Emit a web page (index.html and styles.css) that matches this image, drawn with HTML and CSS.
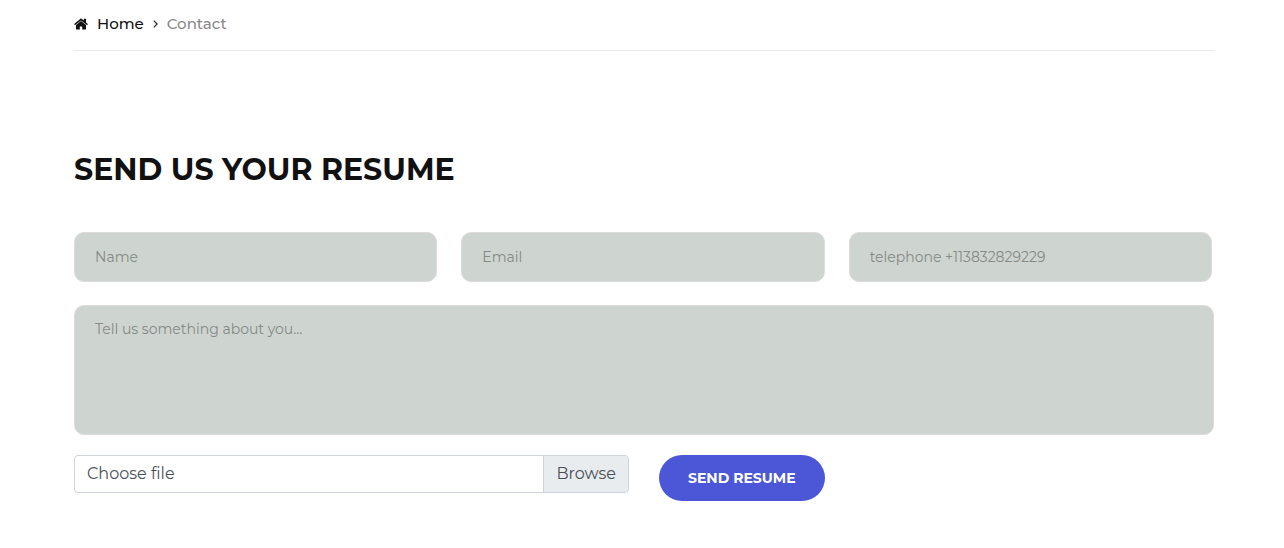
FILE: index.html
```
<!DOCTYPE html>
<html lang="en">
<head>
<meta charset="utf-8">
<meta name="viewport" content="width=device-width, initial-scale=1">
<title>Contact</title>
<link rel="stylesheet" href="styles.css">
</head>
<body>
<main class="page">
  <nav class="breadcrumb" aria-label="Breadcrumb">
    <a class="breadcrumb-home" href="#">
      <svg class="icon-home" viewBox="0 0 14 12" aria-hidden="true"><path d="M7 2.9 2 7v4c0 .4.2.6.6.6h3.2V8.4h2.4v3.2h3.2c.4 0 .6-.2.6-.6V7z"/><path d="M13.8 5.9 12 4.4V1.1c0-.2-.1-.3-.3-.3h-1.6c-.2 0-.3.1-.3.3v1.5L7.8.9c-.5-.4-1.1-.4-1.6 0L.2 5.9c-.1.1-.1.3 0 .4l.5.6c.1.1.3.1.4 0L7 2.4l5.9 4.5c.1.1.3.1.4 0l.5-.6c.1-.1.1-.3 0-.4z"/></svg>
      <span>Home</span>
    </a>
    <svg class="icon-chevron" viewBox="0 0 5 8" aria-hidden="true"><path d="M.8.7 4.1 4 .8 7.3"/></svg>
    <span class="breadcrumb-current" aria-current="page">Contact</span>
  </nav>

  <h1 class="title">SEND US YOUR RESUME</h1>

  <form class="form">
    <div class="fields">
      <input class="field" type="text" aria-label="Name" placeholder="Name">
      <input class="field" type="email" aria-label="Email" placeholder="Email">
      <input class="field" type="tel" aria-label="Telephone" placeholder="telephone +113832829229">
    </div>
    <textarea class="field message" aria-label="Message" placeholder="Tell us something about you..."></textarea>
    <div class="actions">
      <div class="file">
        <input class="file-input" type="file" id="resume">
        <label class="file-label" for="resume">
          <span class="file-name">Choose file</span>
          <span class="file-browse">Browse</span>
        </label>
      </div>
      <div><button class="submit" type="button">SEND RESUME</button></div>
    </div>
  </form>
</main>
</body>
</html>
```
FILE: styles.css
```
* {
  box-sizing: border-box;
}

body {
  margin: 0;
  background: #fff;
  color: #111;
  font-family: Montserrat, Inter, "Open Sans", sans-serif;
}

.page {
  padding: 12px 70px 47px 74px;
}

.breadcrumb {
  display: flex;
  align-items: center;
  gap: 9px;
  padding-bottom: 14px;
  border-bottom: 1px solid #e9e9e9;
  font-size: 15px;
  font-weight: 500;
  line-height: 24px;
}

.breadcrumb-home {
  display: flex;
  align-items: center;
  gap: 9px;
  color: #111;
  text-decoration: none;
}

.icon-home {
  width: 14px;
  height: 12px;
  fill: #111;
}

.icon-chevron {
  width: 5px;
  height: 8px;
  fill: none;
  stroke: #222;
  stroke-width: 1.2;
}

.breadcrumb-current {
  color: #888;
}

.title {
  margin: 99px 0 42px;
  font-size: 30px;
  font-weight: 700;
  line-height: 40px;
}

.fields {
  display: grid;
  grid-template-columns: repeat(3, 1fr);
  gap: 24px;
  padding-right: 2px;
}

.field {
  display: block;
  width: 100%;
  height: 50px;
  padding: 0 20px;
  border: 1px solid #dcdcdc;
  border-radius: 10px;
  background: #ced4cf;
  color: #222;
  font-family: inherit;
  font-size: 14px;
  font-weight: 400;
}

.field::placeholder {
  color: #868a87;
  opacity: 1;
}

.message {
  height: 130px;
  margin-top: 23px;
  padding: 12px 20px;
  line-height: 22px;
  resize: none;
}

.actions {
  display: grid;
  grid-template-columns: 1fr 1fr;
  gap: 30px;
  margin-top: 20px;
}

.file {
  position: relative;
  height: 38px;
}

.file-input {
  position: absolute;
  inset: 0;
  width: 100%;
  opacity: 0;
}

.file-label {
  display: flex;
  height: 100%;
  overflow: hidden;
  border: 1px solid #ced4da;
  border-radius: 4px;
  color: #495057;
  font-size: 16px;
  font-weight: 400;
  font-variant-ligatures: none;
  line-height: 36px;
}

.file-name {
  flex: 1;
  padding: 0 12px;
}

.file-browse {
  padding: 0 12px;
  border-left: 1px solid #ced4da;
  background: #e9ecef;
}

.submit {
  height: 46px;
  padding: 0 29px;
  border: 0;
  border-radius: 23px;
  background: #4b57d6;
  color: #fff;
  font-family: inherit;
  font-size: 14px;
  font-weight: 700;
}
```
